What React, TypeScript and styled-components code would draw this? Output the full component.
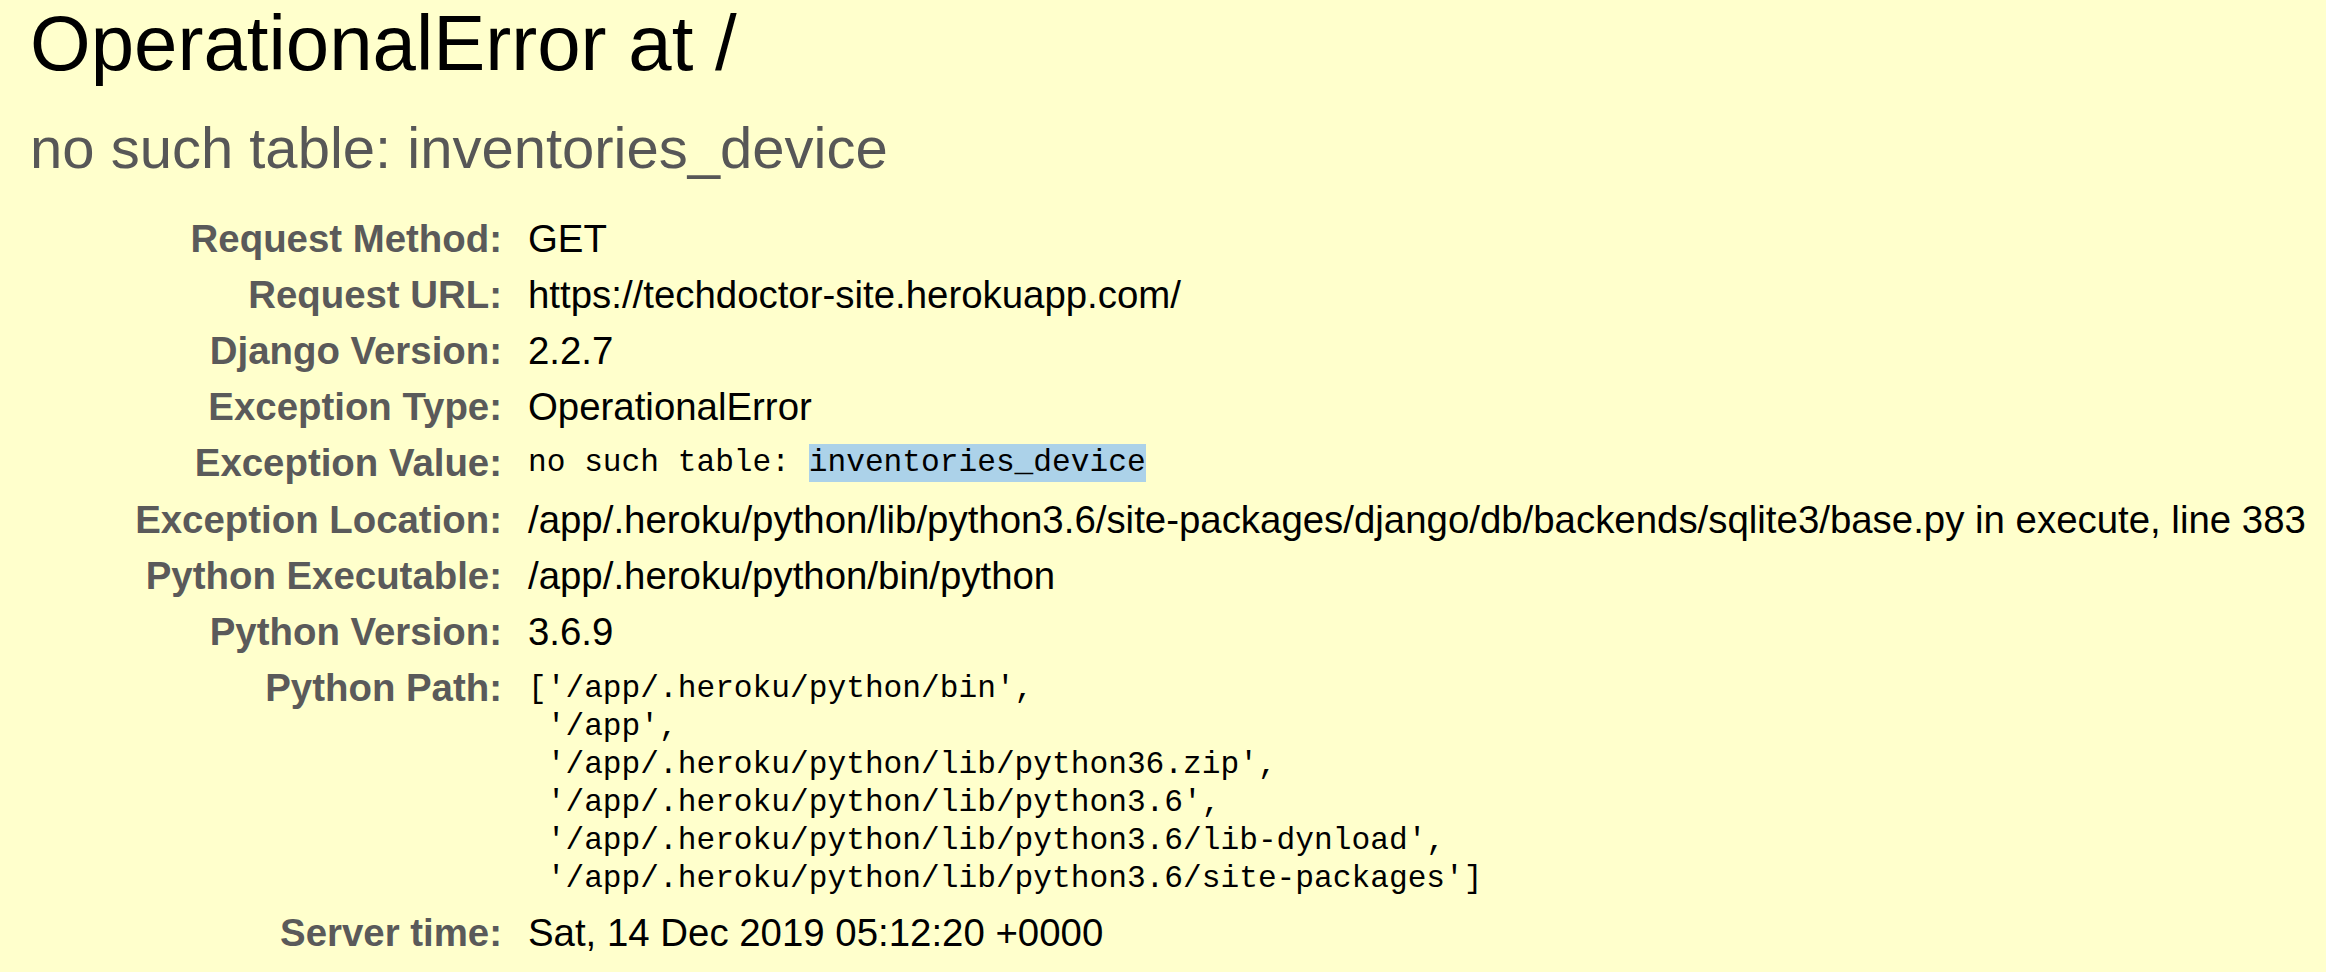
import styled, { createGlobalStyle } from "styled-components";

const GlobalStyle = createGlobalStyle`
  html, body {
    margin: 0;
    padding: 0;
    background-color: #ffffcc;
  }
  body {
    font-family: "Liberation Sans", Arial, Helvetica, sans-serif;
    color: #000;
  }
`;

const Summary = styled.section`
  min-height: 972px;
  box-sizing: border-box;
  padding: 0 0 0 30px;
  background-color: #ffffcc;
`;

const Title = styled.h1`
  margin: 0;
  font-size: 78px;
  line-height: 86px;
  font-weight: normal;
  white-space: nowrap;
`;

const Subtitle = styled.h2`
  margin: 30px 0 30.6px 0;
  font-size: 58px;
  line-height: 64px;
  font-weight: normal;
  color: #575757;
  white-space: nowrap;
`;

const MetaTable = styled.div`
  display: grid;
  grid-template-columns: 472px auto;
  column-gap: 26px;
  align-items: start;
`;

const Label = styled.div`
  padding: 6px 0 6.2px 0;
  font-size: 38.4px;
  line-height: 44px;
  font-weight: bold;
  color: #5a5a5a;
  text-align: right;
  white-space: nowrap;
`;

const Value = styled.div<{ $mono?: boolean }>`
  padding: ${(p) => (p.$mono ? "9px 0 3.2px 0" : "6px 0 6.2px 0")};
  font-size: ${(p) => (p.$mono ? "31.2px" : "38.4px")};
  line-height: ${(p) => (p.$mono ? "38px" : "44px")};
  font-family: ${(p) =>
    p.$mono
      ? `"Liberation Mono", "Courier New", monospace`
      : `"Liberation Sans", Arial, sans-serif`};
  white-space: nowrap;
`;

const Selected = styled.span`
  display: inline-block;
  background-color: #acd2e9;
  line-height: 38px;
`;

const PathCell = styled.div`
  padding: 6px 0;
`;

const PathBlock = styled.pre`
  margin: 4px 0 1px 0;
  font-family: "Liberation Mono", "Courier New", monospace;
  font-size: 31.2px;
  line-height: 38px;
  white-space: pre;
`;

const sysPath = [
  "/app/.heroku/python/bin",
  "/app",
  "/app/.heroku/python/lib/python36.zip",
  "/app/.heroku/python/lib/python3.6",
  "/app/.heroku/python/lib/python3.6/lib-dynload",
  "/app/.heroku/python/lib/python3.6/site-packages",
];

const pprint = (items: string[]) =>
  "[" + items.map((s) => `'${s}'`).join(",\n ") + "]";

const meta: [string, string][] = [
  ["Request Method:", "GET"],
  ["Request URL:", "https://techdoctor-site.herokuapp.com/"],
  ["Django Version:", "2.2.7"],
  ["Exception Type:", "OperationalError"],
];

const metaAfter: [string, string][] = [
  [
    "Exception Location:",
    "/app/.heroku/python/lib/python3.6/site-packages/django/db/backends/sqlite3/base.py in execute, line 383",
  ],
  ["Python Executable:", "/app/.heroku/python/bin/python"],
  ["Python Version:", "3.6.9"],
];

function Row({ label, children }: { label: string; children: React.ReactNode }) {
  return (
    <>
      <Label>{label}</Label>
      {children}
    </>
  );
}

export default function App() {
  return (
    <>
      <GlobalStyle />
      <Summary>
        <Title>OperationalError at /</Title>
        <Subtitle>no such table: inventories_device</Subtitle>
        <MetaTable>
          {meta.map(([k, v]) => (
            <Row key={k} label={k}>
              <Value>{v}</Value>
            </Row>
          ))}
          <Row label="Exception Value:">
            <Value $mono>
              no such table: <Selected>inventories_device</Selected>
            </Value>
          </Row>
          {metaAfter.map(([k, v]) => (
            <Row key={k} label={k}>
              <Value>{v}</Value>
            </Row>
          ))}
          <Row label="Python Path:">
            <PathCell>
              <PathBlock>{pprint(sysPath)}</PathBlock>
            </PathCell>
          </Row>
          <Row label="Server time:">
            <Value>Sat, 14 Dec 2019 05:12:20 +0000</Value>
          </Row>
        </MetaTable>
      </Summary>
    </>
  );
}
